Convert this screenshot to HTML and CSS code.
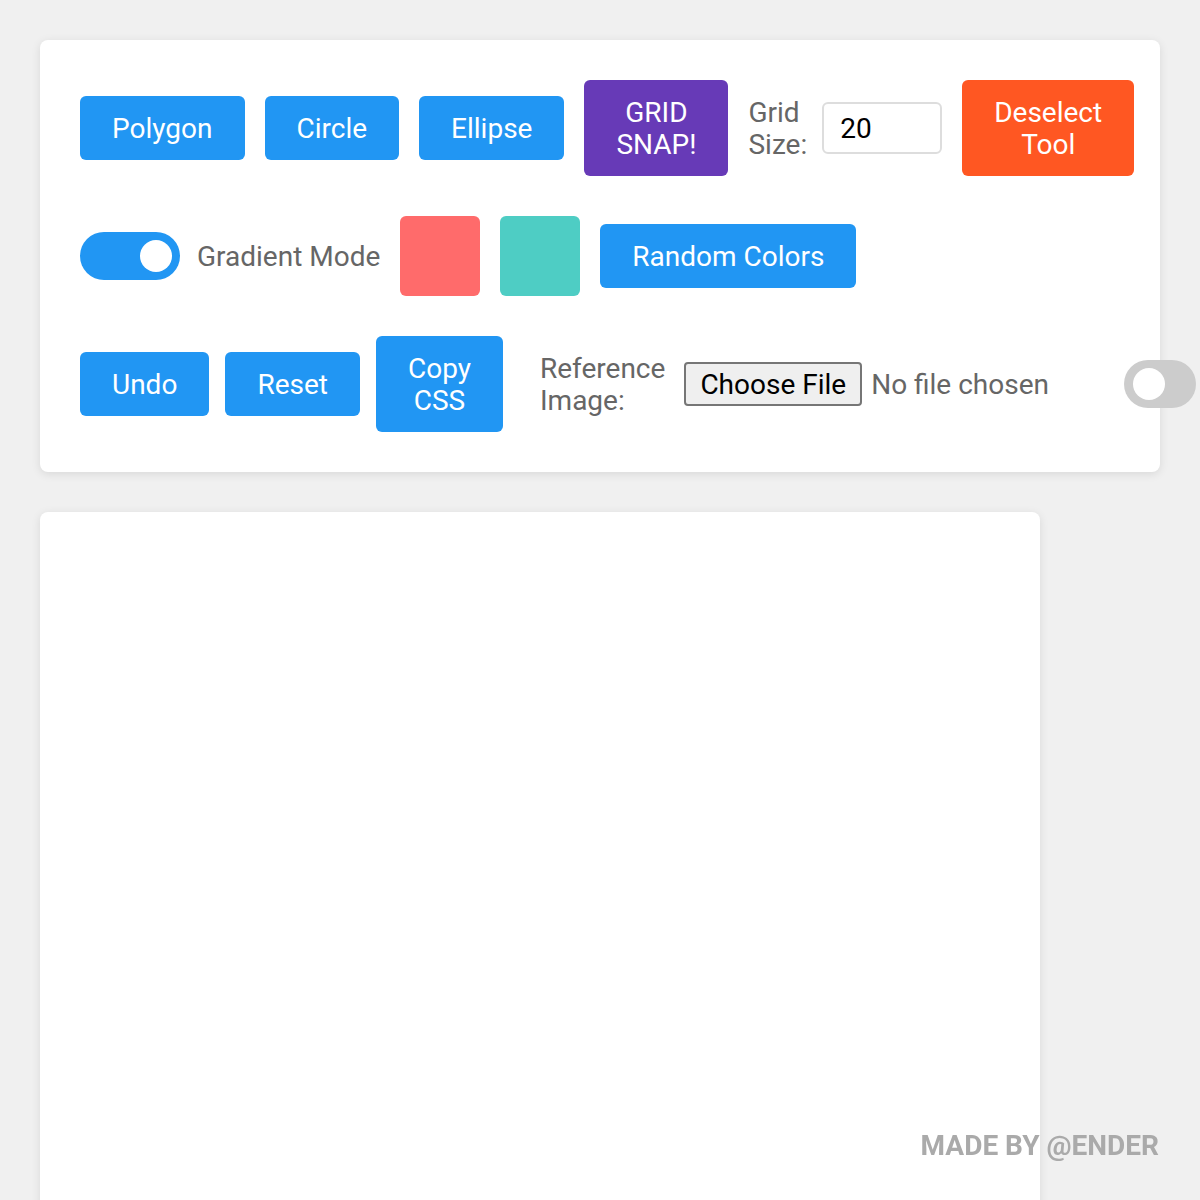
FILE: index.html
```html
<!DOCTYPE html>
<html lang="en">
<head>
<meta charset="utf-8">
<title>Shape Tool</title>
<link rel="stylesheet" href="styles.css">
</head>
<body>
<div class="panel">
  <div class="row">
    <button class="btn">Polygon</button>
    <button class="btn">Circle</button>
    <button class="btn">Ellipse</button>
    <button class="btn btn-purple">GRID<br>SNAP!</button>
    <div class="grid-size">
      <label class="lbl" for="gs">Grid<br>Size:</label>
      <input class="num" id="gs" type="text" value="20">
    </div>
    <button class="btn btn-orange">Deselect<br>Tool</button>
  </div>
  <div class="row">
    <div class="toggle-label">
      <div class="switch"><span class="knob"></span></div>
      <span class="lbl">Gradient Mode</span>
    </div>
    <div class="swatch swatch-red"></div>
    <div class="swatch swatch-teal"></div>
    <button class="btn">Random Colors</button>
  </div>
  <div class="row row-tight">
    <button class="btn">Undo</button>
    <button class="btn">Reset</button>
    <button class="btn">Copy<br>CSS</button>
    <div class="ref">
      <span class="lbl">Reference<br>Image:</span>
      <div class="file">
        <span class="file-btn">Choose File</span>
        <span class="file-text">No file chosen</span>
      </div>
    </div>
    <div class="switch switch-off"><span class="knob"></span></div>
  </div>
</div>
<div class="canvas"></div>
<div class="credit">MADE BY @ENDER</div>
</body>
</html>
```
FILE: styles.css
```css
* { box-sizing: border-box; }

body {
  margin: 0;
  padding: 40px;
  background: #f0f0f0;
  font-family: Roboto, "Liberation Sans", sans-serif;
}

.panel {
  width: 1120px;
  background: #fff;
  border-radius: 8px;
  box-shadow: 0 2px 10px rgba(0, 0, 0, 0.1);
  padding: 40px;
  display: flex;
  flex-direction: column;
  gap: 40px;
}

.row {
  display: flex;
  align-items: center;
  gap: 20px;
}

.row-tight { gap: 16px; }

.btn {
  flex-shrink: 0;
  font-family: Roboto, "Liberation Sans", sans-serif;
  font-size: 28px;
  line-height: 32px;
  color: #fff;
  background: #2196f3;
  border: none;
  border-radius: 6px;
  padding: 17px 32px 15px;
  white-space: nowrap;
}

.btn-purple { background: #673ab7; }
.btn-orange { background: #ff5722; }

.lbl {
  font-size: 28px;
  line-height: 32px;
  padding-top: 2px;
  color: #666;
  white-space: nowrap;
  flex-shrink: 0;
}

.grid-size {
  display: flex;
  align-items: center;
  gap: 15px;
  flex-shrink: 0;
}

.num {
  width: 120px;
  height: 52px;
  border: 2px solid #ddd;
  border-radius: 6px;
  padding: 0 16px;
  font-family: Roboto, "Liberation Sans", sans-serif;
  font-size: 28px;
  color: #000;
  outline: none;
}

.toggle-label {
  display: flex;
  align-items: center;
  gap: 17px;
  flex-shrink: 0;
}

.switch {
  position: relative;
  width: 100px;
  height: 48px;
  border-radius: 24px;
  background: #2196f3;
  flex-shrink: 0;
}

.knob {
  position: absolute;
  top: 8px;
  right: 8px;
  width: 32px;
  height: 32px;
  border-radius: 50%;
  background: #fff;
}

.switch-off {
  width: 72px;
  background: #ccc;
}

.switch-off .knob {
  right: auto;
  left: 9px;
}

.swatch {
  width: 80px;
  height: 80px;
  border-radius: 6px;
  flex-shrink: 0;
}

.swatch-red { background: #ff6b6b; }
.swatch-teal { background: #4ecdc4; }

.ref {
  display: flex;
  align-items: center;
  gap: 19px;
  margin-left: 21px;
  flex-shrink: 0;
}

.file {
  display: flex;
  align-items: center;
  gap: 9px;
  width: 424px;
  font-size: 28px;
}

.file-btn {
  height: 44px;
  line-height: 41px;
  padding: 0 14px;
  border: 2px solid #767676;
  border-radius: 4px;
  background: #efefef;
  color: #000;
  white-space: nowrap;
}

.file-text {
  color: #666;
  white-space: nowrap;
}

.canvas {
  width: 1000px;
  height: 1000px;
  margin-top: 40px;
  background: #fff;
  border-radius: 8px;
  box-shadow: 0 2px 10px rgba(0, 0, 0, 0.1);
}

.credit {
  position: fixed;
  right: 41px;
  bottom: 38px;
  font-size: 28px;
  font-weight: 700;
  color: #aaa;
}
```
